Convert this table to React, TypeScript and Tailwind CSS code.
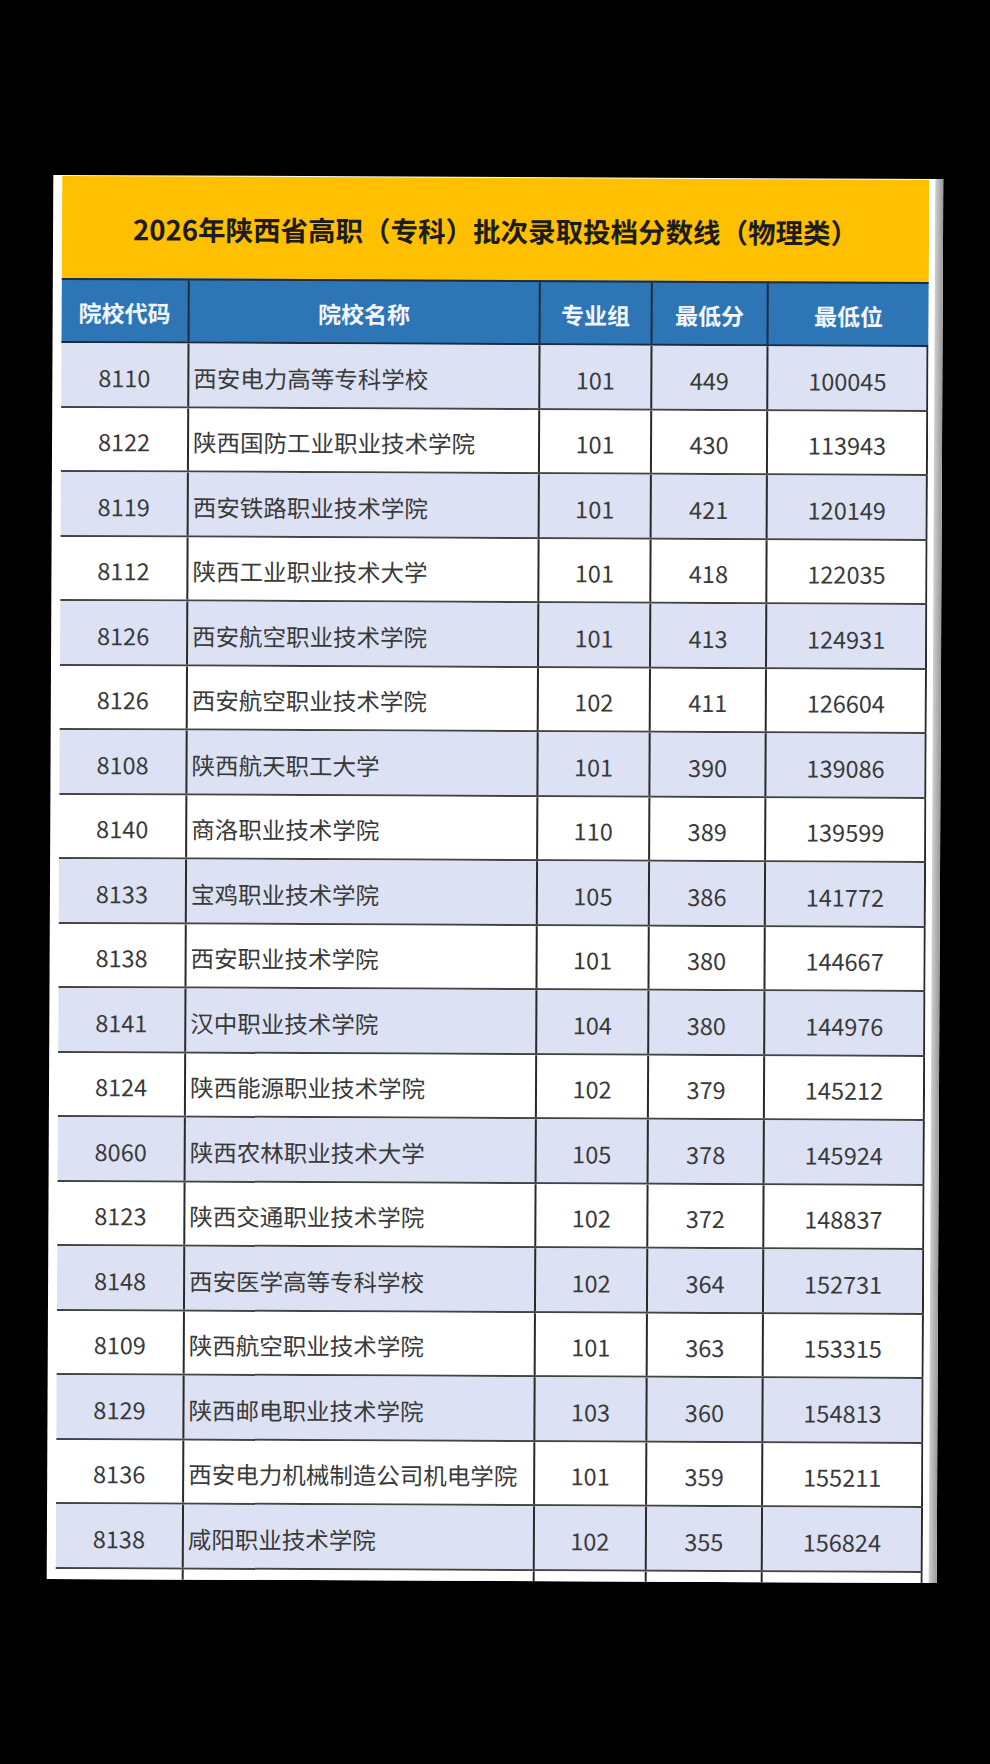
import React from 'react';

type Row = [string, string, string, string, string];

const ROWS: Row[] = [
  ['8110', '西安电力高等专科学校', '101', '449', '100045'],
  ['8122', '陕西国防工业职业技术学院', '101', '430', '113943'],
  ['8119', '西安铁路职业技术学院', '101', '421', '120149'],
  ['8112', '陕西工业职业技术大学', '101', '418', '122035'],
  ['8126', '西安航空职业技术学院', '101', '413', '124931'],
  ['8126', '西安航空职业技术学院', '102', '411', '126604'],
  ['8108', '陕西航天职工大学', '101', '390', '139086'],
  ['8140', '商洛职业技术学院', '110', '389', '139599'],
  ['8133', '宝鸡职业技术学院', '105', '386', '141772'],
  ['8138', '西安职业技术学院', '101', '380', '144667'],
  ['8141', '汉中职业技术学院', '104', '380', '144976'],
  ['8124', '陕西能源职业技术学院', '102', '379', '145212'],
  ['8060', '陕西农林职业技术大学', '105', '378', '145924'],
  ['8123', '陕西交通职业技术学院', '102', '372', '148837'],
  ['8148', '西安医学高等专科学校', '102', '364', '152731'],
  ['8109', '陕西航空职业技术学院', '101', '363', '153315'],
  ['8129', '陕西邮电职业技术学院', '103', '360', '154813'],
  ['8136', '西安电力机械制造公司机电学院', '101', '359', '155211'],
  ['8138', '咸阳职业技术学院', '102', '355', '156824'],
  ['', '', '', '', ''],
];

const HEADERS = ['院校代码', '院校名称', '专业组', '最低分', '最低位'];

const COLS = 'grid grid-cols-[126px_351px_112px_116px_162px]';

function DataRow({ row, index }: { row: Row; index: number }) {
  const [code, name, group, score, rank] = row;
  const shaded = index % 2 === 0;
  return (
    <div
      className={`${COLS} h-[64.5px] shrink-0 border-b-2 border-[#444] text-[23.5px] text-[#3a3a3a] ${
        shaded ? 'bg-[#dce2f4]' : 'bg-white'
      }`}
    >
      <div className="flex items-center justify-center pt-[6px]">{code}</div>
      <div className="flex items-center border-l-2 border-[#2a2a2a] pl-[4px] pt-[6px] whitespace-nowrap">{name}</div>
      <div className="flex items-center justify-center border-l-2 border-[#2a2a2a] pt-[6px]">{group}</div>
      <div className="flex items-center justify-center border-l-2 border-[#2a2a2a] pt-[6px]">{score}</div>
      <div className="flex items-center justify-center border-x-2 border-[#2a2a2a] pt-[6px]">{rank}</div>
    </div>
  );
}

export default function App() {
  return (
    <div className="min-h-[1764px] w-[990px] overflow-hidden bg-black pt-[177px] font-['Noto_Sans_CJK_SC','Noto_Sans',sans-serif]">
      <div className="ml-[50px] flex h-[1404px] w-[890px] rotate-[0.27deg] overflow-hidden bg-white">
        <div className="flex w-[876px] flex-col pl-[9px] pt-[1px]">
          <div className="flex h-[102px] shrink-0 items-center justify-center bg-[#fec000] pt-[3px] text-[27.5px] font-bold text-[#1c1c1c]">
            2026年陕西省高职（专科）批次录取投档分数线（物理类）
          </div>
          <div className={`${COLS} h-[65px] shrink-0 border-y-2 border-[#1d2d40] bg-[#2e75b6] text-[23px] font-bold text-[#f2f6fb]`}>
            {HEADERS.map((h, i) => (
              <div
                key={h}
                className={`flex items-center justify-center pt-[3px] ${i > 0 ? 'border-l-2 border-[#1d2d40]' : ''}`}
              >
                {h}
              </div>
            ))}
          </div>
          {ROWS.map((row, i) => (
            <DataRow key={i} row={row} index={i} />
          ))}
        </div>
        <div className="w-[6px] bg-white" />
        <div className="w-[8px] bg-gradient-to-r from-[#d0d0d0] to-[#9a9a9a]" />
      </div>
    </div>
  );
}
